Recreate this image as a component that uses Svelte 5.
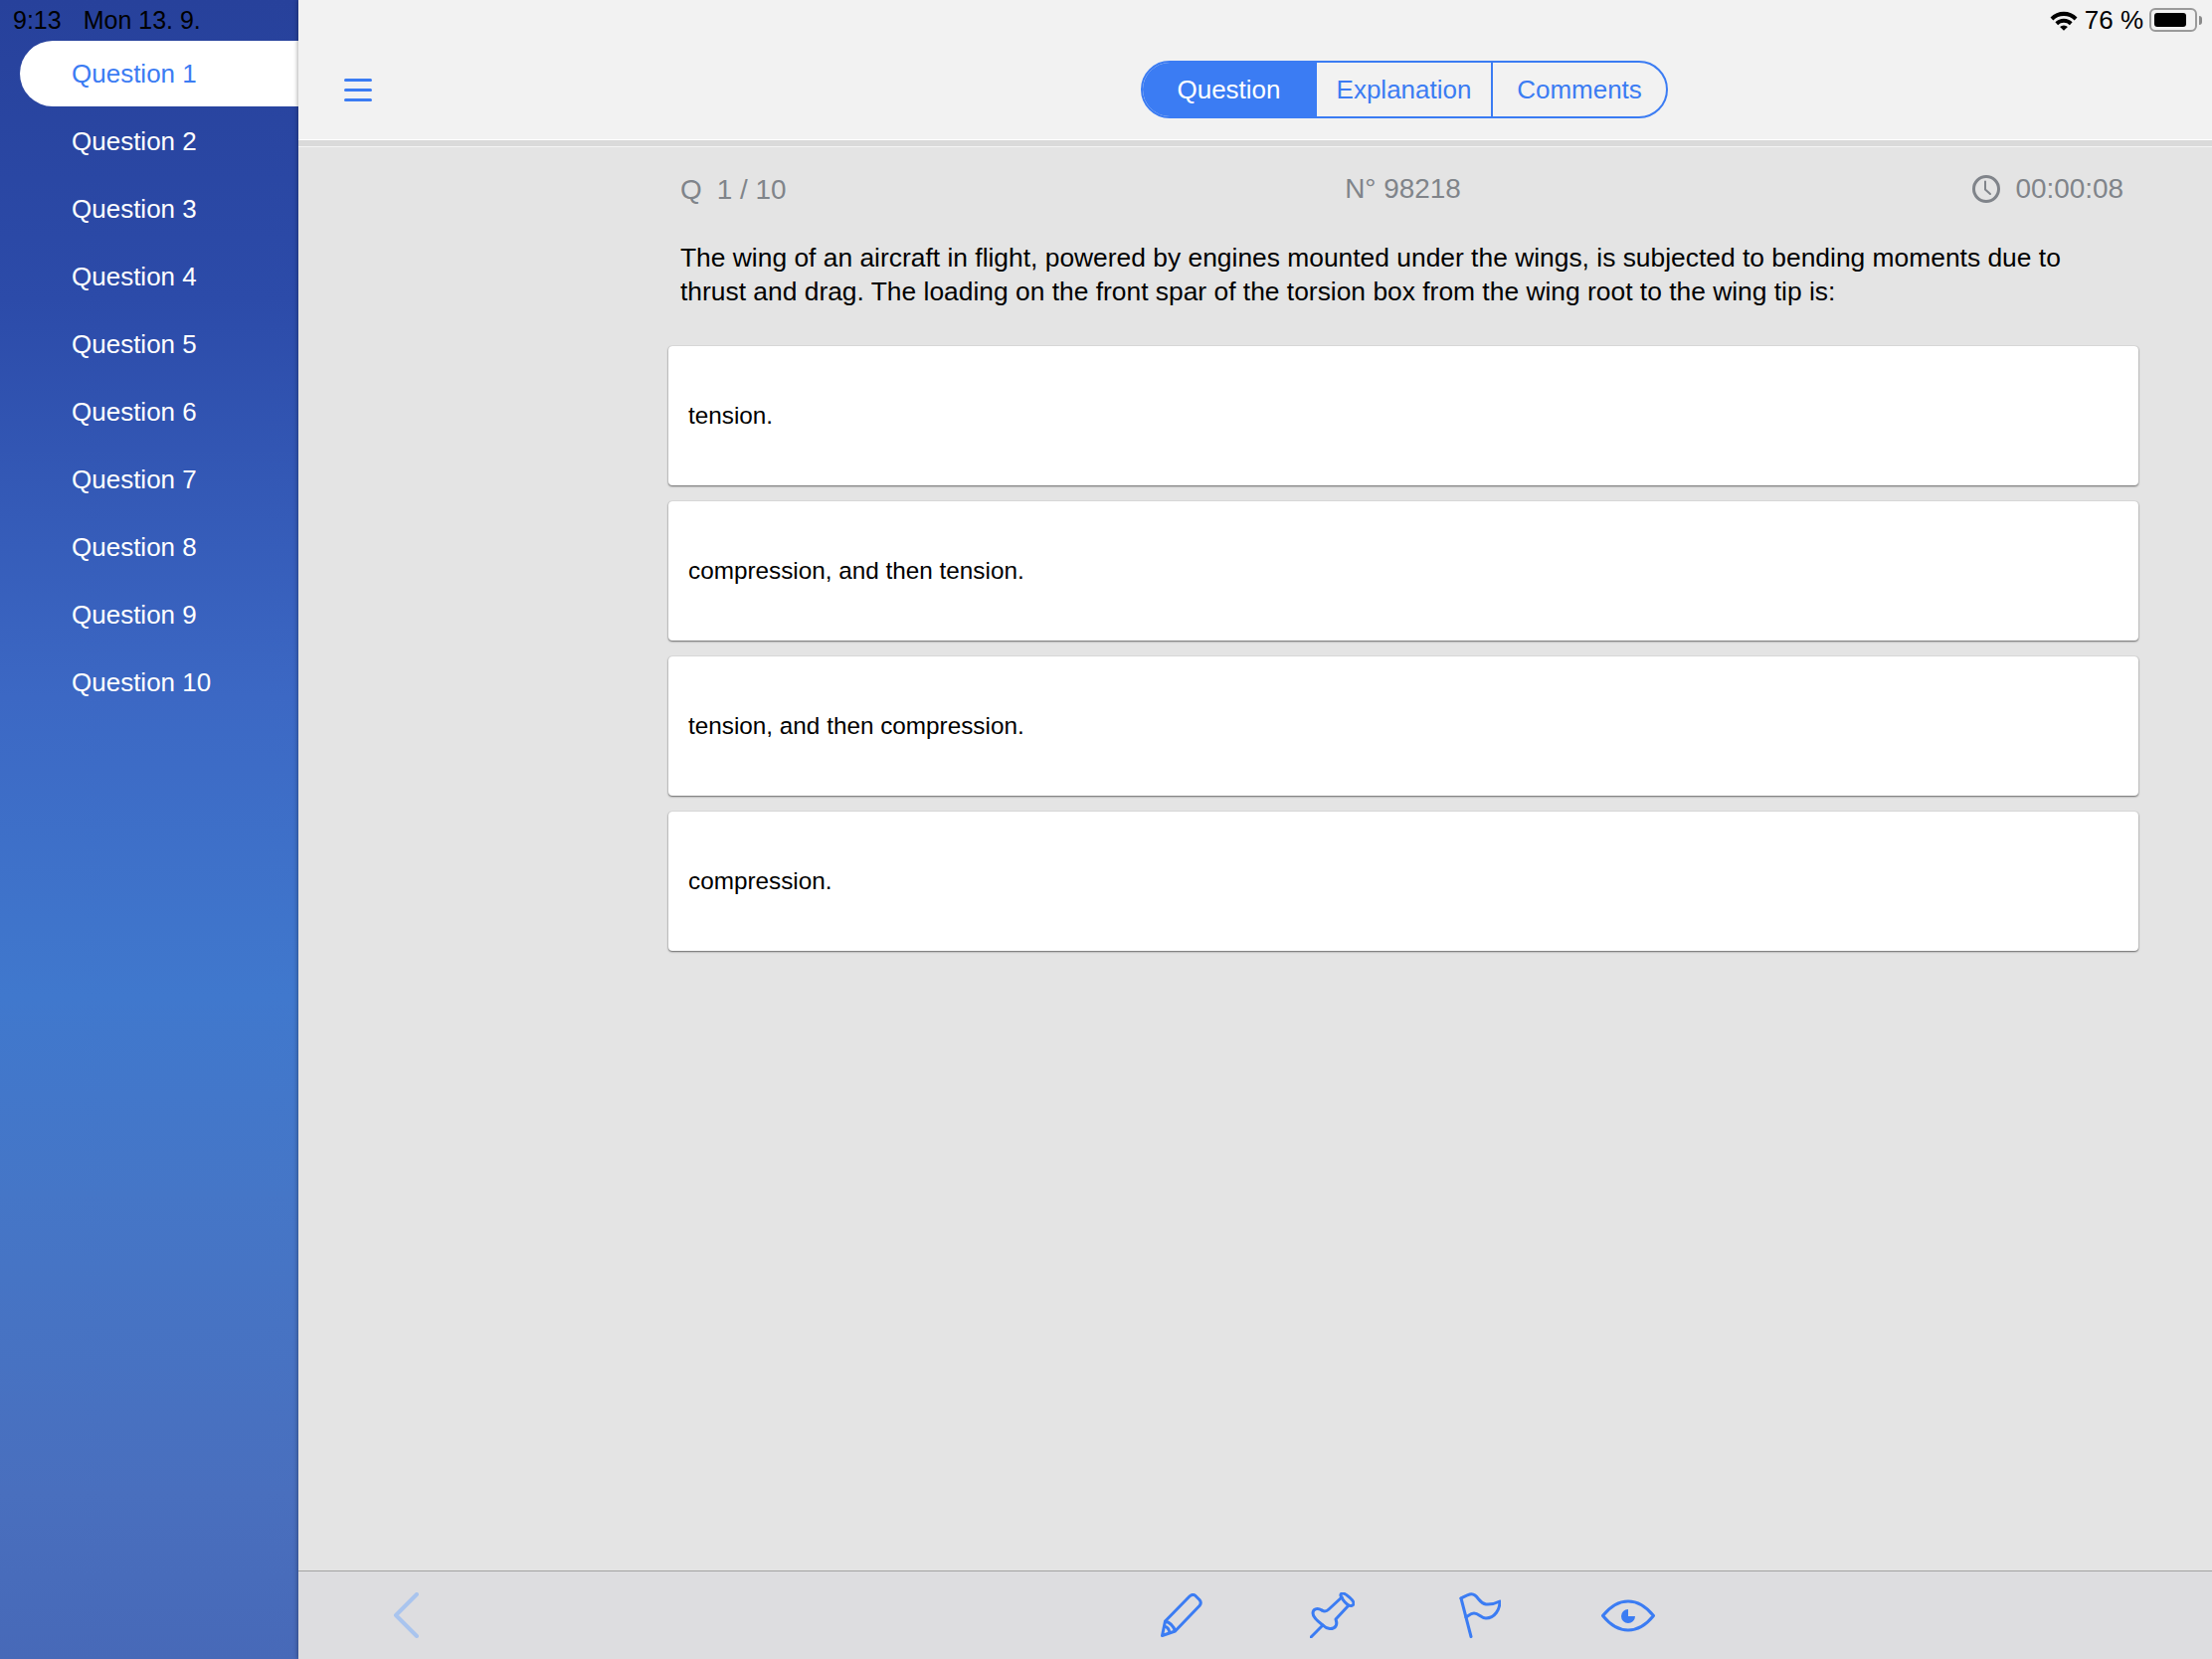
<script>
  const questions = Array.from({ length: 10 }, (_, i) => `Question ${i + 1}`);
  const answers = [
    'tension.',
    'compression, and then tension.',
    'tension, and then compression.',
    'compression.'
  ];
  const tabs = ['Question', 'Explanation', 'Comments'];
  let current = $state(0);
  let tab = $state(0);
</script>

<div class="app">
  <aside class="sidebar">
    <div class="status-left"><span>9:13</span><span>Mon 13. 9.</span></div>
    <nav>
      {#each questions as q, i}
        <button class="nav-item" class:active={current === i} onclick={() => (current = i)}>{q}</button>
      {/each}
    </nav>
  </aside>

  <main class="main">
    <header class="header">
      <div class="status-right">
        <svg class="wifi" width="28" height="21" viewBox="0 0 27 20">
          <path d="M0.5 7 A18.5 18.5 0 0 1 26.5 7 L23.8 10 A14.6 14.6 0 0 0 3.2 10 Z" />
          <path d="M5.2 11.8 A11.8 11.8 0 0 1 21.8 11.8 L19.2 14.6 A8 8 0 0 0 7.8 14.6 Z" />
          <path d="M9.7 16.3 A5.6 5.6 0 0 1 17.3 16.3 L13.5 20 Z" />
        </svg>
        <span>76 %</span>
        <div class="battery"><div class="level"></div></div>
        <div class="nub"></div>
      </div>
      <div class="toolbar">
        <button class="menu" aria-label="Menu"><i></i><i></i><i></i></button>
        <div class="tabs">
          {#each tabs as t, i}
            <button class="tab" class:on={tab === i} onclick={() => (tab = i)}>{t}</button>
          {/each}
        </div>
      </div>
    </header>

    <section class="content">
      <div class="meta">
        <span class="count"><span>Q</span><span>1 / 10</span></span>
        <span class="number">N° 98218</span>
        <span class="timer">
          <svg width="30" height="30" viewBox="0 0 30 30" fill="none" stroke="#80848a" stroke-width="3" stroke-linecap="round">
            <circle cx="15" cy="15" r="12.5" />
            <path d="M14 7.5 V15.5 L19 20" stroke-width="2" />
          </svg>
          00:00:08
        </span>
      </div>
      <p class="question">The wing of an aircraft in flight, powered by engines mounted under the wings, is subjected to bending moments due to thrust and drag. The loading on the front spar of the torsion box from the wing root to the wing tip is:</p>
      <div class="answers">
        {#each answers as a}
          <button class="answer">{a}</button>
        {/each}
      </div>
    </section>

    <footer class="footer">
      <svg class="back" width="28" height="46" viewBox="0 0 28 46" fill="none" stroke="#a9c4ee" stroke-width="4" stroke-linecap="round" stroke-linejoin="round">
        <path d="M24 2 L3 23 L24 44" />
      </svg>
      <div class="actions">
        <svg width="42" height="44" viewBox="0 0 42 44">
          <path d="M1.5 42.5 L4.5 28 L29 3 Q31.5 0.5 34.5 2 L39 6.5 Q41.5 9.5 39 12.5 L14.5 38 Z M4.5 28 Q12 30 14.5 38 M3.6 33 Q8 34 9 39.5" />
        </svg>
        <svg width="45" height="46" viewBox="0 0 45 46">
          <path d="M1 45 L13 33" />
          <path d="M12 18 C7 15 3 17 3 21 C3 25 9 30 13 33 C17 37 23 38 26 34 C28 31 26 28 26 27 L39 13" />
          <path d="M12 18 C15 20 17 19 19 17 L32 5" />
          <path d="M32 5 C30 3 31 1 33 1 C36 1 44 8 44 11 C44 13.5 41 14 39 13 C37 12 33 8 32 5 Z" />
        </svg>
        <svg class="flag" width="42" height="46" viewBox="0 0 42 46">
          <path d="M2 6 L12 44.5" />
          <path d="M2 6 C8 3 12 0 16 3 C20 6 21 11 27 12 C32 12.5 37 11 41 9 C41 17 36 26 27 26 C22 26 20 21 15 21 C12 21 10 23 7 25" />
        </svg>
        <svg class="eye" width="54" height="33" viewBox="0 0 54 33">
          <path d="M1.5 16.5 C10 6 18 2 27 2 C36 2 44 6 52.5 16.5 C44 27 36 31 27 31 C18 31 10 27 1.5 16.5 Z" />
          <path class="pupil" d="M27 17 V10 A7 7 0 1 0 34 17 Z" />
        </svg>
      </div>
    </footer>
  </main>
</div>

<style>
  :global(body) {
    margin: 0;
    font-family: "Liberation Sans", Arial, sans-serif;
  }

  button {
    font: inherit;
    border: 0;
    background: none;
    padding: 0;
    cursor: pointer;
  }

  .app {
    display: flex;
    width: 2224px;
    height: 1668px;
    overflow: hidden;
    background: #e4e4e4;
  }

  .sidebar {
    flex: 0 0 300px;
    padding-left: 20px;
    box-sizing: border-box;
    background: linear-gradient(180deg, #27419b 0%, #2c4ba9 18%, #3c68c4 42%, #4078cd 60%, #4576c7 72%, #496fbe 90%, #4769b8 100%);
  }

  .status-left {
    display: flex;
    gap: 22px;
    height: 41px;
    margin-left: -7px;
    align-items: center;
    font-size: 25px;
    color: #000;
  }

  nav {
    display: flex;
    flex-direction: column;
    gap: 2px;
  }

  .nav-item {
    height: 66px;
    padding-left: 52px;
    text-align: left;
    font-size: 26px;
    color: #fff;
    border-radius: 33px 0 0 33px;
  }

  .nav-item.active {
    background: #fff;
    color: #3b7cf3;
  }

  .main {
    position: relative;
    flex: 1;
    display: flex;
    flex-direction: column;
    min-width: 0;
    box-shadow: -1px 0 4px rgba(0, 0, 0, 0.3);
  }

  .header {
    position: relative;
    height: 140px;
    background: #f2f2f2;
    border-bottom: 1px solid #fff;
    box-shadow: 0 6px 0 #dadada, 0 7px 0 #f4f4f4;
  }

  .status-right {
    position: absolute;
    top: 8px;
    right: 10px;
    display: flex;
    align-items: center;
    height: 24px;
    font-size: 26px;
    color: #000;
  }

  .wifi {
    margin-right: 7px;
  }

  .status-right span {
    margin-right: 6px;
  }

  .battery {
    width: 48px;
    height: 24px;
    box-sizing: border-box;
    padding: 3px;
    border: 2px solid #9a9a9a;
    border-radius: 6px;
  }

  .level {
    width: 32px;
    height: 100%;
    background: #000;
    border-radius: 3px;
  }

  .nub {
    width: 3px;
    height: 9px;
    margin-left: 2px;
    background: #8a8a8a;
    border-radius: 0 3px 3px 0;
  }

  .toolbar {
    position: relative;
    display: flex;
    align-items: center;
    height: 100%;
    padding-top: 40px;
    padding-left: 46px;
    box-sizing: border-box;
  }

  .menu {
    display: flex;
    flex-direction: column;
    gap: 7px;
    width: 28px;
  }

  .menu i {
    display: block;
    height: 3px;
    border-radius: 2px;
    background: #3b7cf3;
  }

  .tabs {
    display: flex;
    margin-left: 773px;
    height: 58px;
    box-sizing: border-box;
    border: 2px solid #3b7cf3;
    border-radius: 29px;
    overflow: hidden;
  }

  .tab {
    font-size: 26px;
    color: #3b7cf3;
    width: 177px;
    border-left: 2px solid #3b7cf3;
  }

  .tab:first-child {
    width: 173px;
    border-left: 0;
  }

  .tab:last-child {
    width: 176px;
  }

  .tab.on {
    background: #3b7cf3;
    color: #fff;
  }

  .content {
    flex: 1;
    padding: 30px 74px 0 372px;
  }

  .meta {
    display: grid;
    grid-template-columns: 1fr auto 1fr;
    align-items: center;
    height: 38px;
    padding: 0 15px 0 12px;
    font-size: 27.9px;
    color: #80848a;
  }

  .count {
    display: flex;
    gap: 15px;
    padding-top: 2px;
  }

  .number {
    margin-left: 2px;
  }

  .timer {
    display: flex;
    align-items: center;
    justify-content: flex-end;
    gap: 14px;
  }

  .question {
    margin: 33px 0 0;
    padding: 0 12px;
    font-size: 26.4px;
    line-height: 34px;
    color: #000;
  }

  .answers {
    display: flex;
    flex-direction: column;
    gap: 16px;
    margin-top: 38px;
  }

  .answer {
    height: 140px;
    padding-left: 20px;
    text-align: left;
    font-size: 24.3px;
    color: #000;
    background: #fff;
    border-radius: 4px;
    box-shadow: 0 1px 2px rgba(0, 0, 0, 0.55), 0 0 1px rgba(0, 0, 0, 0.25);
  }

  .footer {
    display: flex;
    align-items: center;
    height: 88px;
    padding-left: 95px;
    background: #dddde0;
    border-top: 1px solid #a2a2a2;
  }

  .actions {
    display: flex;
    align-items: center;
    gap: 108px;
    margin-left: 744px;
  }

  .actions svg {
    fill: none;
    stroke: #3b7cf3;
    stroke-width: 3;
    stroke-linecap: round;
    stroke-linejoin: round;
  }

  .actions .flag {
    margin-left: -3px;
  }

  .actions .eye {
    margin-left: -7px;
  }

  .actions .pupil {
    fill: #3b7cf3;
    stroke: none;
  }
</style>
